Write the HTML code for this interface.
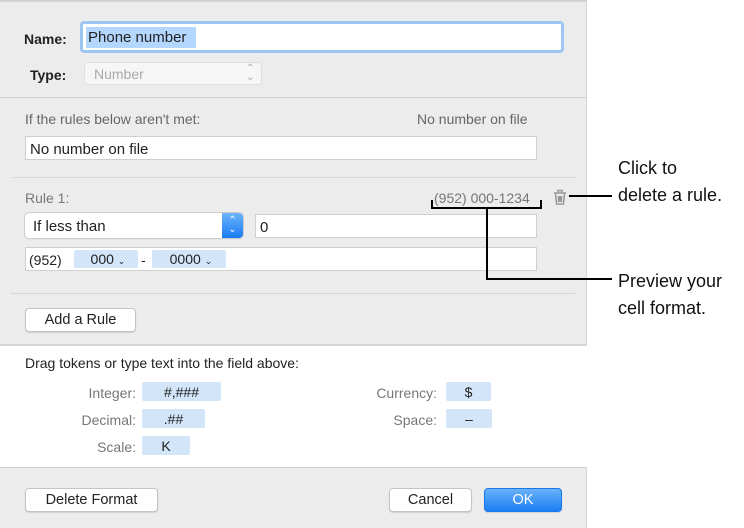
<!DOCTYPE html>
<html><head><style>
*{box-sizing:border-box;margin:0;padding:0}
body{width:744px;height:528px;background:#fff;position:relative;font-family:"Liberation Sans",sans-serif;font-size:14px;color:#222;overflow:hidden}
.a{position:absolute}
.field{position:absolute;background:#fff;border:1px solid #cfcfcf}
.btn{position:absolute;background:#fff;border:1px solid #c4c4c4;border-radius:4px;text-align:center;box-shadow:0 1px 1px rgba(0,0,0,.12);font-size:14.5px}
.tok{position:absolute;background:#d3e5f9;text-align:center;font-size:14px;line-height:20px;border-radius:2px}
.lbl{position:absolute;color:#777;text-align:right;font-size:14px}
.hr{position:absolute;height:1px;background:#d6d6d6}
.cal{position:absolute;font-size:18px;color:#111;line-height:27px}
.k{position:absolute;background:#000}
</style></head><body>
<div class="a" style="left:0;top:0;width:587px;height:528px;background:#ececec;border-right:1px solid #d8d8d8"></div>
<div class="a" style="left:0;top:0;width:587px;height:3px;background:linear-gradient(#c8c8c8,#ececec)"></div>

<div class="a" style="left:24px;top:31px;font-weight:bold;font-size:14px">Name:</div>
<div class="a" style="left:80px;top:21px;width:484px;height:32px;border:3px solid #9ec6f3;border-radius:4px;background:#fff"></div>
<div class="a" style="left:86px;top:27px;height:21px;width:110px;background:#b3d7ff"></div>
<div class="a" style="left:88px;top:29px;font-size:15px">Phone number</div>

<div class="a" style="left:30px;top:67px;font-weight:bold">Type:</div>
<div class="a" style="left:84px;top:62px;width:178px;height:23px;background:#f6f6f6;border:1px solid #dedede;border-radius:4px"></div>
<div class="a" style="left:94px;top:66px;color:#aaa">Number</div>
<div class="a" style="left:246px;top:64px;color:#aaa;font-size:10px;line-height:9px">⌃<br>⌄</div>

<div class="hr" style="left:0;top:97px;width:587px;background:#d0d0d0"></div>

<div class="a" style="left:25px;top:111px;color:#666">If the rules below aren't met:</div>
<div class="a" style="left:417px;top:111px;color:#666">No number on file</div>
<div class="field" style="left:25px;top:136px;width:512px;height:24px"></div>
<div class="a" style="left:30px;top:141px;font-size:15px">No number on file</div>

<div class="hr" style="left:13px;top:177px;width:562px"></div>

<div class="a" style="left:25px;top:190px;color:#777">Rule 1:</div>
<div class="a" style="left:434px;top:190px;color:#777">(952) 000-1234</div>
<svg class="a" style="left:552px;top:188px" width="16" height="18" viewBox="0 0 16 18"><g fill="none" stroke="#999" stroke-width="1.5"><path d="M2 5h12M6 5V2.5h4V5M3.5 5l1 11h7l1-11M6.5 8v6M8 8v6M9.5 8v6"/></g></svg>

<div class="a" style="left:25px;top:213px;width:218px;height:25px;background:#fff;border-radius:4px;box-shadow:0 0 0 1px #ccc,0 1px 1px rgba(0,0,0,.15)"></div>
<div class="a" style="left:33px;top:218px;font-size:15px">If less than</div>
<div class="a" style="left:222px;top:213px;width:21px;height:25px;background:linear-gradient(#6cb3fa,#1a7cf3);border-radius:0 4px 4px 0;color:#fff;font-size:10px;line-height:9px;text-align:center;padding-top:3px">⌃<br>⌄</div>
<div class="field" style="left:255px;top:214px;width:282px;height:24px"></div>
<div class="a" style="left:260px;top:219px;font-size:15px">0</div>

<div class="field" style="left:25px;top:247px;width:512px;height:24px"></div>
<div class="a" style="left:29px;top:252px">(952)</div>
<div class="tok" style="left:74px;top:250px;width:64px;height:18px;line-height:19px">&nbsp;000 <span style="font-size:9px">⌄</span></div>
<div class="a" style="left:141px;top:252px">-</div>
<div class="tok" style="left:152px;top:250px;width:74px;height:18px;line-height:19px">&nbsp;0000 <span style="font-size:9px">⌄</span></div>

<div class="hr" style="left:10px;top:293px;width:565px"></div>
<div class="btn" style="left:25px;top:308px;width:111px;height:24px;line-height:23px">Add a Rule</div>

<div class="a" style="left:0;top:344px;width:587px;height:2px;background:#d6d6d6"></div>
<div class="a" style="left:0;top:346px;width:587px;height:121px;background:#fff"></div>
<div class="hr" style="left:0;top:467px;width:587px;background:#d0d0d0"></div>

<div class="a" style="left:25px;top:355px;font-size:14px">Drag tokens or type text into the field above:</div>
<div class="lbl" style="left:30px;top:385px;width:106px">Integer:</div>
<div class="lbl" style="left:30px;top:412px;width:106px">Decimal:</div>
<div class="lbl" style="left:30px;top:439px;width:106px">Scale:</div>
<div class="lbl" style="left:330px;top:385px;width:107px">Currency:</div>
<div class="lbl" style="left:330px;top:412px;width:107px">Space:</div>
<div class="tok" style="left:142px;top:382px;width:79px;height:19px">#,###</div>
<div class="tok" style="left:142px;top:409px;width:63px;height:19px">.##</div>
<div class="tok" style="left:142px;top:436px;width:48px;height:19px">K</div>
<div class="tok" style="left:446px;top:382px;width:45px;height:19px">$</div>
<div class="tok" style="left:446px;top:409px;width:46px;height:19px">–</div>

<div class="btn" style="left:25px;top:488px;width:133px;height:24px;line-height:23px">Delete Format</div>
<div class="btn" style="left:389px;top:488px;width:83px;height:24px;line-height:23px">Cancel</div>
<div class="btn" style="left:484px;top:488px;width:78px;height:24px;line-height:23px;background:linear-gradient(#69b1fa,#1b7ff5);border-color:#1a79ea;color:#fff">OK</div>

<div class="k" style="left:431px;top:207px;width:111px;height:2px"></div>
<div class="k" style="left:431px;top:200px;width:2px;height:8px"></div>
<div class="k" style="left:540px;top:200px;width:2px;height:8px"></div>
<div class="k" style="left:486px;top:208px;width:2px;height:72px"></div>
<div class="k" style="left:486px;top:278px;width:126px;height:2px"></div>
<div class="k" style="left:569px;top:195px;width:43px;height:2px"></div>
<div class="cal" style="left:618px;top:155px">Click to<br>delete a rule.</div>
<div class="cal" style="left:618px;top:268px">Preview your<br>cell format.</div>
</body></html>
